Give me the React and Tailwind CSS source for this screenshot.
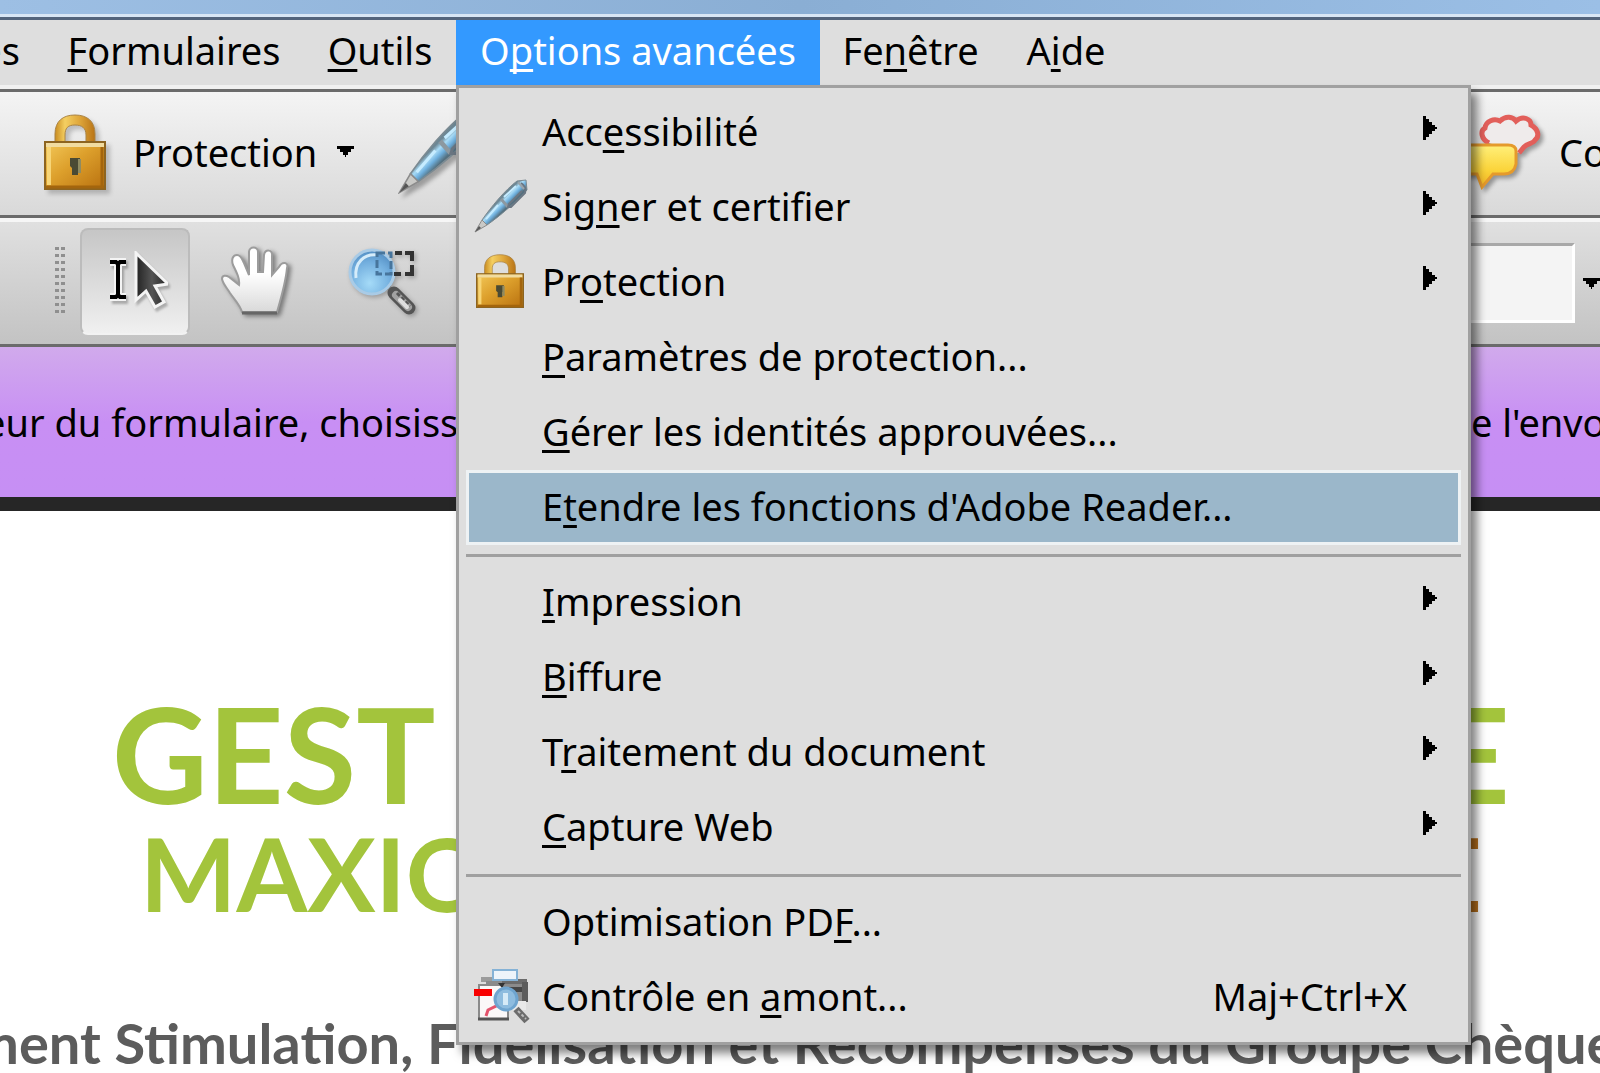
import React from 'react';

const menus = [
  { id: 'comments', before: 'es', width: 'w-[44px] justify-end' },
  { id: 'forms', key: 'F', after: 'ormulaires', width: 'w-[260px] justify-center' },
  { id: 'tools', key: 'O', after: 'utils', width: 'w-[152px] justify-center' },
  { id: 'advanced', before: 'O', key: 'p', after: 'tions avancées', width: 'w-[364px] justify-center', open: true },
  { id: 'window', before: 'Fe', key: 'n', after: 'être', width: 'w-[181px] justify-center' },
  { id: 'help', before: 'A', key: 'i', after: 'de', width: 'w-[130px] justify-center' },
];

const groups = [
  [
    { before: 'Acc', key: 'e', after: 'ssibilité', submenu: true },
    { before: 'Sig', key: 'n', after: 'er et certifier', submenu: true, icon: 'pen' },
    { before: 'Pr', key: 'o', after: 'tection', submenu: true, icon: 'lock' },
    { key: 'P', after: 'aramètres de protection...' },
    { key: 'G', after: 'érer les identités approuvées...' },
    { before: 'E', key: 't', after: "endre les fonctions d'Adobe Reader...", active: true },
  ],
  [
    { key: 'I', after: 'mpression', submenu: true },
    { key: 'B', after: 'iffure', submenu: true },
    { before: 'T', key: 'r', after: 'aitement du document', submenu: true },
    { key: 'C', after: 'apture Web', submenu: true },
  ],
  [
    { before: 'Optimisation PD', key: 'F', after: '...' },
    { before: 'Contrôle en ', key: 'a', after: 'mont...', icon: 'preflight', shortcut: 'Maj+Ctrl+X' },
  ],
];

const Label = ({ before, hotkey, after }) => (
  <span className="whitespace-pre">
    {before}
    {hotkey && (
      <u className="decoration-[3px] underline-offset-[4px] [text-decoration-skip-ink:none]">{hotkey}</u>
    )}
    {after}
  </span>
);

const LockIcon = ({ className }) => (
  <svg viewBox="0 0 62 76" preserveAspectRatio="none" className={className} aria-hidden="true">
    <defs>
      <linearGradient id="lockBody" x1="0" y1="0" x2="1" y2="1">
        <stop offset="0" stopColor="#f3c95a" />
        <stop offset="0.45" stopColor="#dda02c" />
        <stop offset="1" stopColor="#b8700f" />
      </linearGradient>
      <linearGradient id="lockShackle" x1="0" y1="0" x2="1" y2="0">
        <stop offset="0" stopColor="#c98c20" />
        <stop offset="0.25" stopColor="#f4cf62" />
        <stop offset="0.6" stopColor="#e0a83c" />
        <stop offset="1" stopColor="#b97416" />
      </linearGradient>
    </defs>
    <path
      d="M11 31V20C11 7 19 1 31 1s20 6 20 19v11H42V21c0-7-4-10-11-10s-10 3-10 10v10z"
      fill="url(#lockShackle)"
      stroke="#a98345"
    />
    <rect x="1" y="28" width="60" height="47" fill="url(#lockBody)" stroke="#8d6420" strokeWidth="2" />
    <path d="M2 31h58" stroke="#f1dca0" strokeWidth="4" />
    <path d="M5 33v38" stroke="#f7d577" strokeWidth="4" />
    <path d="M58 33v40M2 73h58" stroke="#a3650d" strokeWidth="3" />
    <path d="M26 44h10v8l-2 2v7h-6v-7l-2-2z" fill="#4a4a34" />
    <path d="M34 45h3v14h-3z" fill="#8f8b62" />
  </svg>
);

const PenIcon = ({ className }) => (
  <svg viewBox="0 0 54 54" className={className} aria-hidden="true">
    <defs>
      <linearGradient id="penBody" x1="0.3" y1="0.3" x2="0.7" y2="0.7">
        <stop offset="0.3" stopColor="#6d8794" />
        <stop offset="0.42" stopColor="#a9dcf7" />
        <stop offset="0.55" stopColor="#6fb0de" />
        <stop offset="0.7" stopColor="#54707f" />
      </linearGradient>
    </defs>
    <path d="M8 41C17 28 31 11 43 2l9-1 1 10C42 23 26 37 13 46z" fill="url(#penBody)" stroke="#7b8a92" />
    <path d="M1 53l7-12 5 5z" fill="#c9c9c6" stroke="#8b8b8b" />
    <path d="M1 53l4-6 2 2z" fill="#555" />
    <path d="M27 20l7 8" stroke="#8c98a0" strokeWidth="3" />
    <path d="M47 4c4 3 5 6 4 10L37 28l-3 0 1-3L48 12" fill="none" stroke="#6a7682" strokeWidth="2" />
    <path d="M44 3l6 7" stroke="#9aa4ab" strokeWidth="2" />
    <path d="M12 40L24 26M30 18L42 7" stroke="#c6ecff" strokeWidth="2" />
  </svg>
);

const PreflightIcon = ({ className }) => (
  <svg viewBox="0 0 56 56" className={className} aria-hidden="true">
    <path d="M7 9h14v5H7z" fill="#9b9b9b" />
    <path d="M12 13h41v20H12z" fill="#8b8b8b" />
    <path d="M28 11h25v5H28z" fill="#6b6b6b" />
    <path d="M34 19h14v5H34z" fill="#474747" />
    <path d="M48 14h6v20h-6z" fill="#5c5c5c" />
    <path d="M38 33h14v9H38z" fill="#e9e9e9" />
    <path d="M19 2h24v10H19z" fill="#eef4fa" stroke="#85b2d6" strokeWidth="2" />
    <path d="M5 17h22l7 7v27H5z" fill="#fbf8f8" stroke="#8a8a8a" strokeWidth="2" />
    <path d="M4 51h31" stroke="#555" strokeWidth="3" />
    <path d="M24 15l4 5 3-5z" fill="#333" />
    <path d="M0 21h18v7H0z" fill="#f80000" />
    <path d="M12 48l2-6 8-4 3-5" fill="none" stroke="#e4536c" strokeWidth="3" />
    <circle cx="32" cy="31" r="11" fill="#8ebcdf" stroke="#6ea4cf" strokeWidth="3" />
    <path d="M29 25h5v12h-5z" fill="#d6eaf7" />
    <path d="M42 41l11 12" stroke="#6c6c6c" strokeWidth="7" />
    <path d="M44 43l8 8" stroke="#bdbdbd" strokeWidth="2" strokeDasharray="3 2" />
  </svg>
);

const TextSelectIcon = () => (
  <svg viewBox="0 0 66 60" className="h-[60px] w-[66px] drop-shadow-[2px_3px_1px_rgba(0,0,0,0.25)]" aria-hidden="true">
    <defs>
      <linearGradient id="cursorFill" x1="0" y1="0" x2="1" y2="0">
        <stop offset="0" stopColor="#222" />
        <stop offset="0.5" stopColor="#555" />
        <stop offset="1" stopColor="#222" />
      </linearGradient>
    </defs>
    <path
      d="M8 11h6l2 2 2-2h6M16 13v31M8 46h6l2-2 2 2h6"
      fill="none"
      stroke="#f4f4f4"
      strokeWidth="8"
    />
    <path d="M8 11h6l2 2 2-2h6M16 13v31M8 46h6l2-2 2 2h6" fill="none" stroke="#000" strokeWidth="4" />
    <path
      d="M34 2l32 31-13 2 9 16-9 5-9-16-10 9z"
      fill="url(#cursorFill)"
      stroke="#f4f4f4"
      strokeWidth="3"
    />
  </svg>
);

const HandIcon = () => (
  <svg viewBox="0 0 70 72" className="h-[72px] w-[70px] drop-shadow-[3px_2px_2px_rgba(0,0,0,0.4)]" aria-hidden="true">
    <defs>
      <linearGradient id="handFill" x1="0" y1="0" x2="0" y2="1">
        <stop offset="0.4" stopColor="#fff" />
        <stop offset="1" stopColor="#d9d9d9" />
      </linearGradient>
    </defs>
    <path
      d="M22 67C20 60 14 54 10 48C7 43 3 39 2 34C2 30 6 30 9 32L19 40C20 34 17 28 13 20C11 14 13 10 17 10C21 10 22 14 24 18L29 30V7C29 1 38 1 38 7V27H43L44 10C45 4 53 4 52 11V30L59 22C62 16 69 17 67 23C66 34 62 50 57 67Z"
      fill="url(#handFill)"
      stroke="#9c9c9c"
      strokeWidth="2"
    />
    <path d="M22 68h35" stroke="#666" strokeWidth="3" />
  </svg>
);

const ZoomIcon = () => (
  <svg viewBox="0 0 72 72" className="h-[72px] w-[72px] drop-shadow-[2px_2px_2px_rgba(0,0,0,0.25)]" aria-hidden="true">
    <defs>
      <radialGradient id="lensFill" cx="0.45" cy="0.75" r="0.8">
        <stop offset="0" stopColor="#a5dbf8" />
        <stop offset="0.6" stopColor="#72aede" />
        <stop offset="1" stopColor="#4c87bd" />
      </radialGradient>
    </defs>
    <path d="M42 42l8 8" stroke="#7d7d7d" strokeWidth="5" />
    <path d="M48 48L63 63" stroke="#555" strokeWidth="13" strokeLinecap="round" />
    <path d="M50 50L62 62" stroke="#a2a2a2" strokeWidth="8" strokeLinecap="round" />
    <path d="M51 48L64 61" stroke="#555" strokeWidth="3" strokeDasharray="4 2" />
    <path d="M54 55L61 62" stroke="#dedede" strokeWidth="4" strokeLinecap="round" />
    <circle cx="26" cy="27" r="22" fill="url(#lensFill)" stroke="#a9cbe6" strokeWidth="3" />
    <path d="M10 33C8 18 18 8 32 10" fill="none" stroke="#d5ecfa" strokeWidth="3" />
    <path d="M31 8h14v21H31z" fill="none" stroke="#47759c" strokeWidth="3" strokeDasharray="8 3" />
    <path d="M49 8h7M59 8h7v8M66 20v9h-7M55 29h-7" fill="none" stroke="#333" strokeWidth="4" />
  </svg>
);

const CommentIcon = () => (
  <svg viewBox="0 0 104 90" className="h-[90px] w-[104px] drop-shadow-[3px_3px_2px_rgba(0,0,0,0.35)]" aria-hidden="true">
    <defs>
      <linearGradient id="bubbleFill" x1="0" y1="0" x2="0" y2="1">
        <stop offset="0" stopColor="#fff07a" />
        <stop offset="0.6" stopColor="#fbd43a" />
        <stop offset="1" stopColor="#f2b322" />
      </linearGradient>
    </defs>
    <path
      d="M49 36C41 32 40 24 45 21C46 14 54 11 60 14C66 8 73 10 76 14C83 8 91 12 91 18C98 22 100 29 95 33C93 37 88 36 84 40L79 46"
      fill="#efebeb"
      stroke="#e25f5a"
      strokeWidth="5"
    />
    <path
      d="M8 38H68Q76 38 76 44V57Q74 67 64 67H53L42 80L37 67H8Z"
      fill="url(#bubbleFill)"
      stroke="#e59a2c"
      strokeWidth="3"
    />
  </svg>
);

const Caret = () => (
  <svg viewBox="0 0 17 11" className="h-[11px] w-[17px]" shapeRendering="crispEdges" aria-hidden="true">
    <path d="M0 0h17v3h-3v3h-3v3h-2v2H8V9H6V6H3V3H0z" />
  </svg>
);

const SubmenuArrow = () => (
  <svg viewBox="0 0 14 24" className="mb-[5px] h-6 w-[14px]" aria-hidden="true">
    <path d="M0 0h3v3h3v3h3v3h3v2h2v2h-2v2H9v3H6v3H3v3H0z" />
  </svg>
);

const icons = {
  pen: <PenIcon className="h-[54px] w-[54px]" />,
  lock: <LockIcon className="ml-[2px] h-[54px] w-[48px]" />,
  preflight: <PreflightIcon className="h-14 w-14" />,
};

const MenuItem = ({ item }) => (
  <button
    type="button"
    role="menuitem"
    aria-haspopup={item.submenu ? 'menu' : undefined}
    className={`flex h-[75px] w-full items-center border-[3px] pr-[21px] pb-1 text-left ${
      item.active ? 'border-[#eef2f4] bg-[#9bb7ca]' : 'border-transparent'
    }`}
  >
    <span className="flex w-[73px] shrink-0 items-center pl-[5px]">{icons[item.icon]}</span>
    <Label before={item.before} hotkey={item.key} after={item.after} />
    <span className="ml-auto">
      {item.submenu && <SubmenuArrow />}
      {item.shortcut && <span className="mr-[30px]">{item.shortcut}</span>}
    </span>
  </button>
);

const AdvancedMenu = () => (
  <div
    role="menu"
    className="absolute top-full left-0 z-10 w-[1015px] border-[3px] border-[#a0a0a0] bg-[#dedede] p-[7px] text-black shadow-[6px_8px_9px_rgba(0,0,0,0.5)]"
  >
    {groups.map((group, i) => (
      <React.Fragment key={i}>
        {i > 0 && (
          <div className="flex h-5 items-center">
            <hr className="w-full border-t-[3px] border-[#a0a0a0]" />
          </div>
        )}
        {group.map((item) => (
          <MenuItem key={item.after + item.key} item={item} />
        ))}
      </React.Fragment>
    ))}
  </div>
);

const App = () => {
  return (
    <div className="min-h-screen overflow-hidden bg-white font-['Noto_Sans',sans-serif] text-[38px] leading-[52px] text-black">
      {/* Window frame */}
      <div className="h-5 border-b-[3px] border-[#53647c] bg-linear-to-r from-[#9dbfe4] via-[#8aaed4] to-[#9bbfe6]">
        <div className="h-full border-b-[3px] border-[#d8e6f5]" />
      </div>

      {/* Menu bar */}
      <nav className="border-b-[3px] border-[#6b6b6b] bg-[#dedede]">
        <div className="flex border-b-4 border-[#f0f0f0]">
          {menus.map((menu) => (
            <div key={menu.id} className="relative">
              <button
                type="button"
                className={`flex h-[65px] items-center pb-1.5 ${menu.width} ${
                  menu.open ? 'bg-[#3399ff] text-white' : ''
                } ${menu.id === 'comments' ? 'pr-6' : ''}`}
              >
                <Label before={menu.before} hotkey={menu.key} after={menu.after} />
              </button>
              {menu.open && <AdvancedMenu />}
            </div>
          ))}
        </div>
      </nav>

      {/* Task toolbar */}
      <div className="flex h-[126px] items-center border-b-[3px] border-[#6b6b6b] bg-linear-to-b from-[#f4f4f4] to-[#d9d9d9] pb-1 pl-11">
        <button type="button" className="flex items-center">
          <LockIcon className="mr-[27px] h-[76px] w-[62px] drop-shadow-[4px_4px_2px_rgba(0,0,0,0.2)]" />
          Protection
          <span className="ml-[20px]">
            <Caret />
          </span>
        </button>
        <button type="button" aria-label="Signer" className="ml-[44px]">
          <PenIcon className="h-[84px] w-[84px] drop-shadow-[4px_4px_2px_rgba(0,0,0,0.3)]" />
        </button>
        <button type="button" className="ml-auto flex w-[160px] shrink-0 items-center gap-[15px]">
          <span className="shrink-0">
            <CommentIcon />
          </span>
          Co
        </button>
      </div>

      {/* Tools toolbar */}
      <div className="flex h-[129px] items-center border-t-4 border-b-[3px] border-t-[#f6f6f6] border-b-[#6b6b6b] bg-linear-to-b from-[#e0e0e0] to-[#c3c3c3] pb-1 pl-[54px]">
        <div className="h-[72px] w-[12px] bg-[radial-gradient(circle,#8f8f8f_2px,transparent_2px)] bg-size-[6px_7px]" />
        <button
          type="button"
          aria-label="Sélection"
          className="ml-[14px] flex h-[107px] w-[110px] items-center justify-center rounded-lg border-2 border-[#bcbcbc] border-b-[#f2f2f2] bg-linear-to-b from-[#c6c6c6] to-[#f0f0f0]"
        >
          <TextSelectIcon />
        </button>
        <button type="button" aria-label="Main" className="ml-[30px]">
          <HandIcon />
        </button>
        <button type="button" aria-label="Zoom" className="ml-[56px]">
          <ZoomIcon />
        </button>
        <div className="ml-auto flex items-center gap-2 pt-1">
          <input
            type="text"
            aria-label="Rechercher"
            className="h-[80px] w-[160px] border-t-[3px] border-r-[3px] border-b-[3px] border-t-[#a8a8a8] border-r-[#fff] border-b-[#fff] bg-[#f4f4f4]"
          />
          <button type="button" aria-label="Options de recherche">
            <Caret />
          </button>
        </div>
      </div>

      {/* Form message bar */}
      <div className="flex h-[164px] items-center border-b-[14px] border-[#262626] bg-linear-to-b from-[#d1aaec] via-[#c88ff4] to-[#c68ff4] whitespace-nowrap">
        <p className="-ml-4">eur du formulaire, choisiss</p>
        <p className="ml-auto w-[129px]">e l'envo</p>
      </div>

      {/* Document page */}
      <main className="pt-[176px] font-['Lato',sans-serif] font-bold">
        <h1 className="flex justify-between pr-[90px] pl-[112px] text-[132px] leading-[132px] text-[#a3c43c]">
          <span>GEST</span>
          <span>E</span>
        </h1>
        <h2 className="mt-[3px] flex justify-between pr-[118px] pl-[140px] text-[102px] leading-[102px] text-[#a3c43c]">
          <span>MAXIO</span>
          <span className="text-[#b9701c]">E</span>
        </h2>
        <p className="mt-[91px] -ml-7 text-[56px] leading-[56px] whitespace-nowrap text-[#5c5c5c]">
          ment Stimulation, Fidélisation et Récompenses du Groupe Chèque
        </p>
      </main>
    </div>
  );
};

export default App;
